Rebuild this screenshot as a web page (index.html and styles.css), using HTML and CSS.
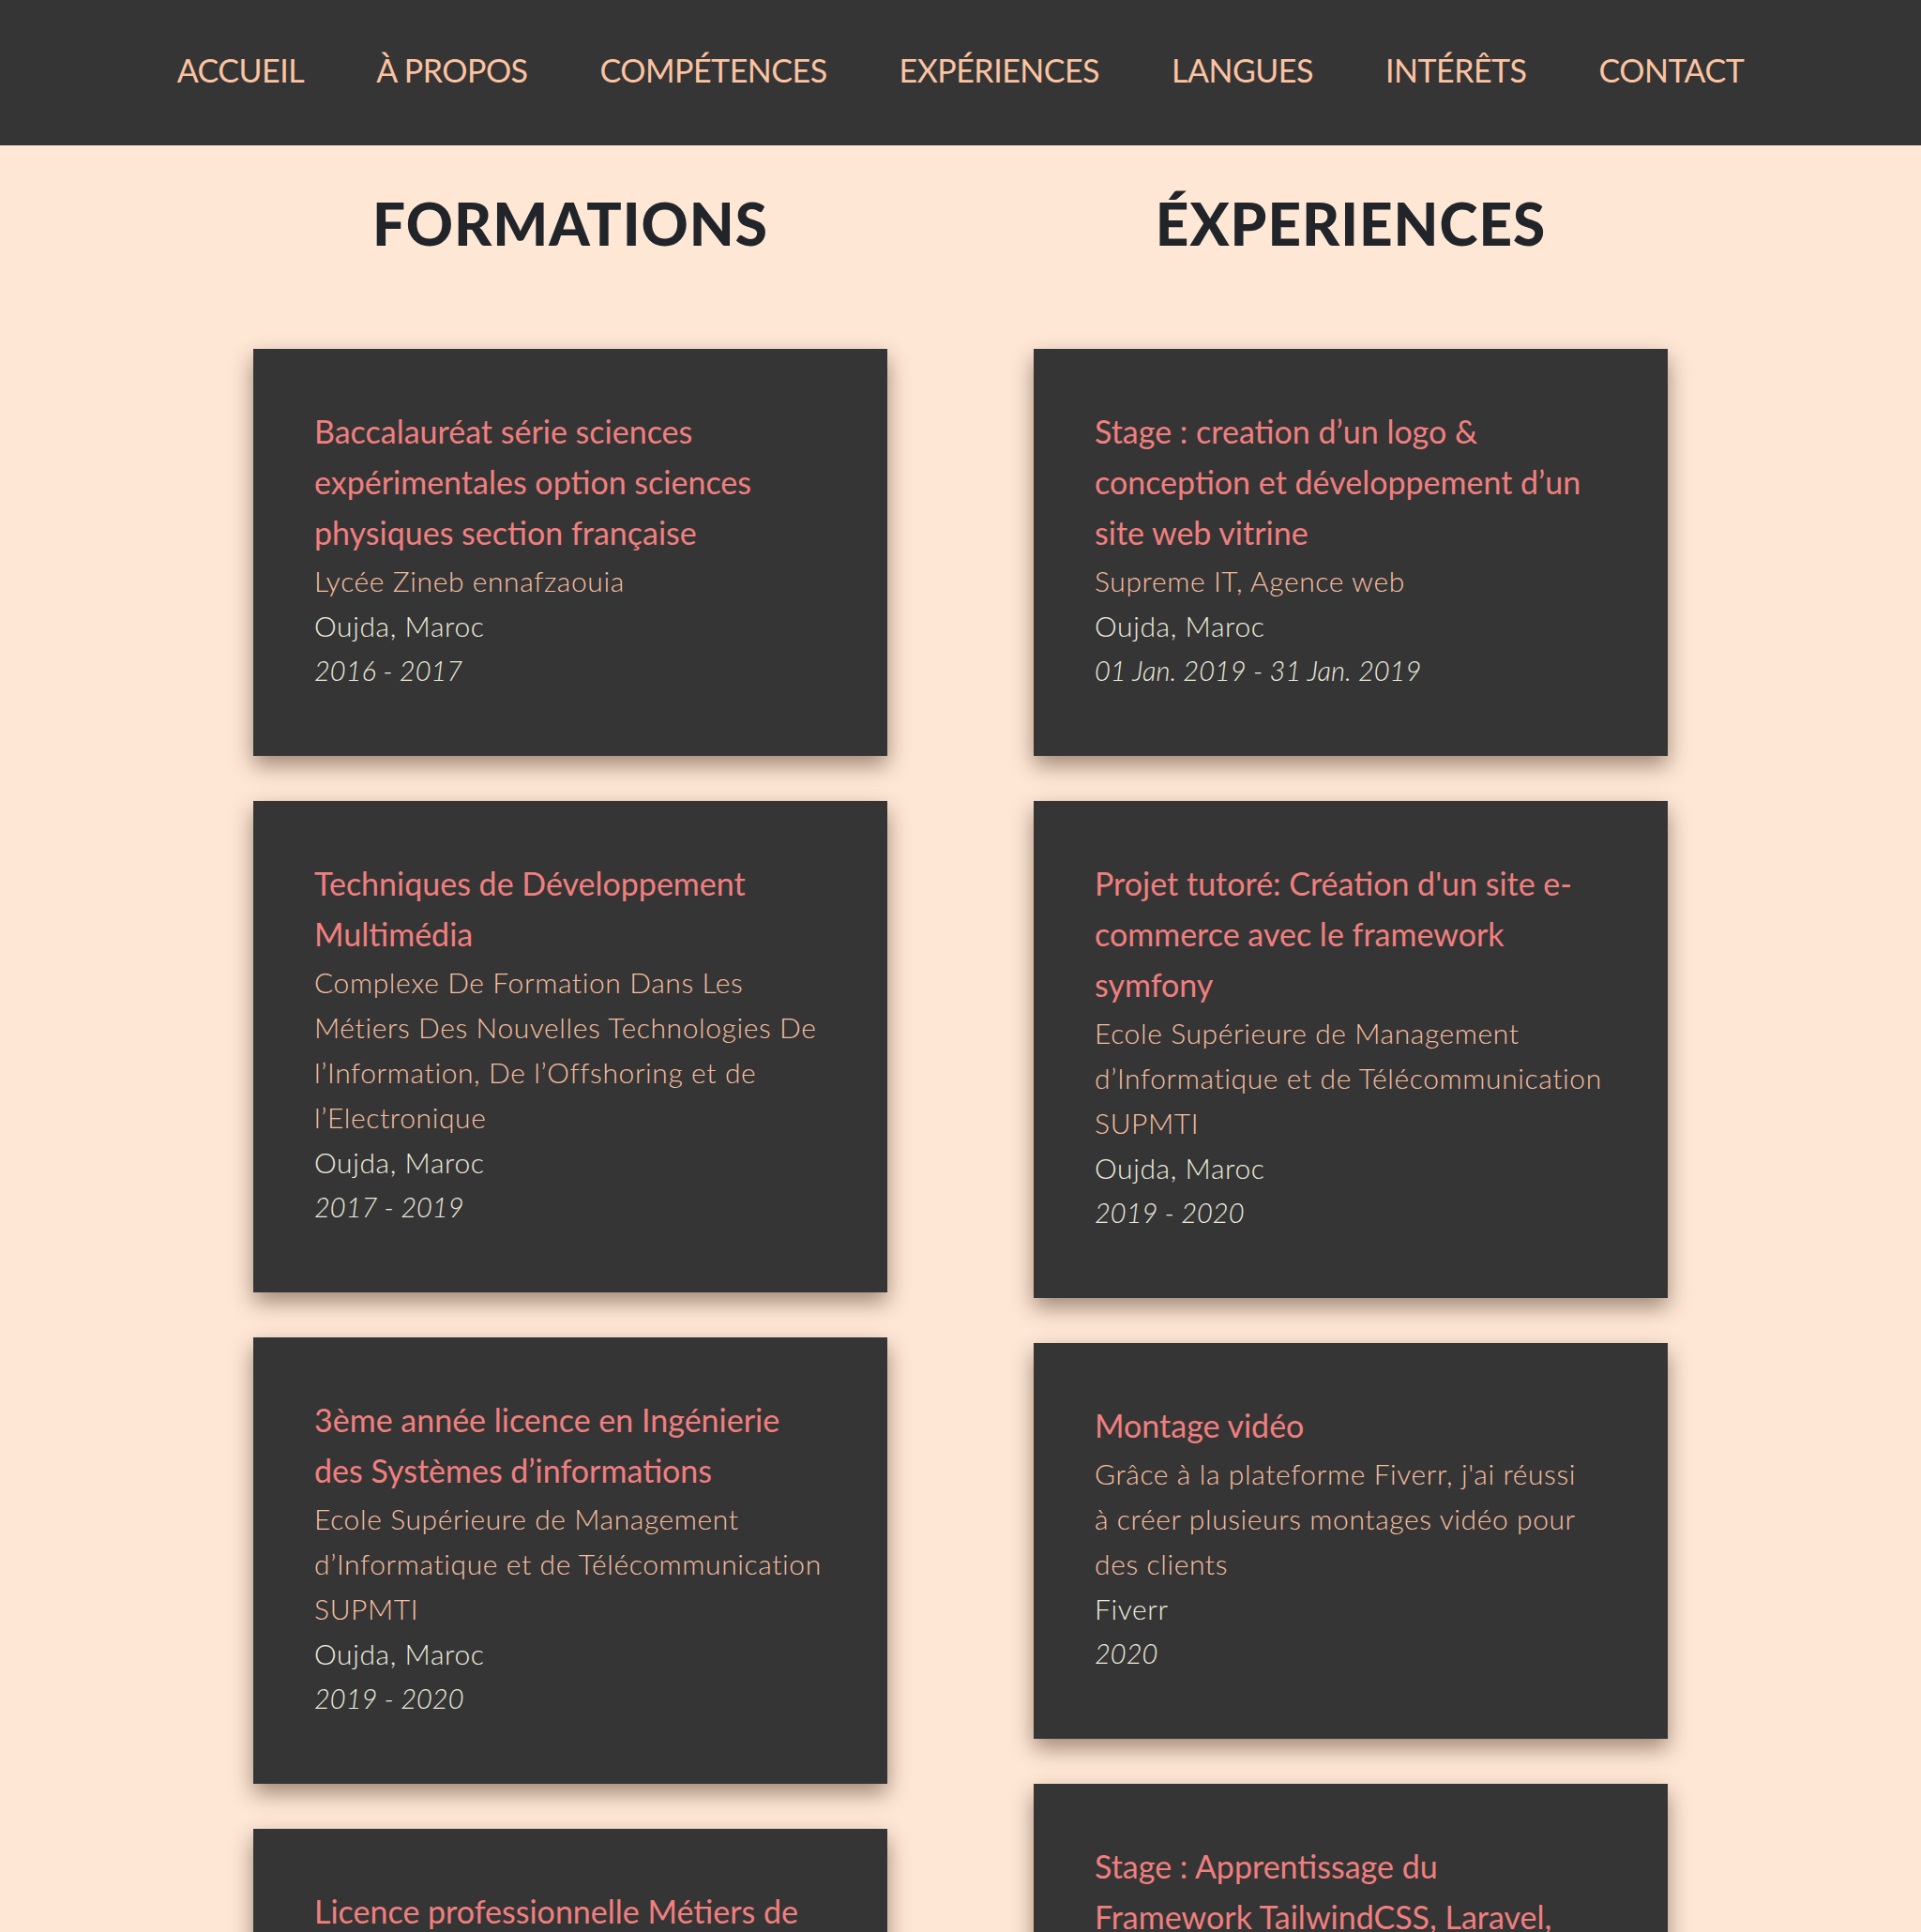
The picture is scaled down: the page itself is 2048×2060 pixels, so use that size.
FILE: index.html
```html
<!DOCTYPE html>
<html lang="fr">
<head>
<meta charset="utf-8">
<title>Parcours</title>
<link rel="stylesheet" href="styles.css">
</head>
<body>
<nav class="topnav">
  <a class="topnav-link" href="#accueil">ACCUEIL</a>
  <a class="topnav-link" href="#apropos">À PROPOS</a>
  <a class="topnav-link" href="#competences">COMPÉTENCES</a>
  <a class="topnav-link" href="#experiences">EXPÉRIENCES</a>
  <a class="topnav-link" href="#langues">LANGUES</a>
  <a class="topnav-link" href="#interets">INTÉRÊTS</a>
  <a class="topnav-link" href="#contact">CONTACT</a>
</nav>

<main class="parcours">
  <section class="column">
    <h2 class="column-title">FORMATIONS</h2>
    <article class="card">
      <h3 class="card-title">Baccalauréat série sciences<br>expérimentales option sciences<br>physiques section française</h3>
      <p class="card-org">Lycée Zineb ennafzaouia</p>
      <p class="card-place">Oujda, Maroc</p>
      <p class="card-date">2016 - 2017</p>
    </article>
    <article class="card">
      <h3 class="card-title">Techniques de Développement<br>Multimédia</h3>
      <p class="card-org">Complexe De Formation Dans Les<br>Métiers Des Nouvelles Technologies De<br>l’Information, De l’Offshoring et de<br>l’Electronique</p>
      <p class="card-place">Oujda, Maroc</p>
      <p class="card-date">2017 - 2019</p>
    </article>
    <article class="card">
      <h3 class="card-title">3ème année licence en Ingénierie<br>des Systèmes d’informations</h3>
      <p class="card-org">Ecole Supérieure de Management<br>d’Informatique et de Télécommunication<br>SUPMTI</p>
      <p class="card-place">Oujda, Maroc</p>
      <p class="card-date">2019 - 2020</p>
    </article>
    <article class="card">
      <h3 class="card-title">Licence professionnelle Métiers de<br>l’Informatique</h3>
      <p class="card-org">Faculté des Sciences</p>
      <p class="card-place">Oujda, Maroc</p>
      <p class="card-date">2020 - 2021</p>
    </article>
  </section>

  <section class="column">
    <h2 class="column-title">ÉXPERIENCES</h2>
    <article class="card">
      <h3 class="card-title">Stage : creation d’un logo &amp;<br>conception et développement d’un<br>site web vitrine</h3>
      <p class="card-org">Supreme IT, Agence web</p>
      <p class="card-place">Oujda, Maroc</p>
      <p class="card-date">01 Jan. 2019 - 31 Jan. 2019</p>
    </article>
    <article class="card">
      <h3 class="card-title">Projet tutoré: Création d'un site e-<br>commerce avec le framework<br>symfony</h3>
      <p class="card-org">Ecole Supérieure de Management<br>d’Informatique et de Télécommunication<br>SUPMTI</p>
      <p class="card-place">Oujda, Maroc</p>
      <p class="card-date">2019 - 2020</p>
    </article>
    <article class="card">
      <h3 class="card-title">Montage vidéo</h3>
      <p class="card-org">Grâce à la plateforme Fiverr, j'ai réussi<br>à créer plusieurs montages vidéo pour<br>des clients</p>
      <p class="card-place">Fiverr</p>
      <p class="card-date">2020</p>
    </article>
    <article class="card">
      <h3 class="card-title">Stage : Apprentissage du<br>Framework TailwindCSS, Laravel,<br>Livewire</h3>
      <p class="card-org">Supreme IT, Agence web</p>
      <p class="card-place">Oujda, Maroc</p>
      <p class="card-date">2021</p>
    </article>
  </section>
</main>
</body>
</html>
```

FILE: styles.css
```css
html, body {
  margin: 0;
  padding: 0;
}

body {
  background: #ffe7d6;
  font-family: "Lato", "Open Sans", sans-serif;
}

.topnav {
  height: 155px;
  background: #353535;
  display: flex;
  justify-content: center;
  align-items: center;
  gap: 77px;
  padding-bottom: 6px;
  box-sizing: border-box;
}

.topnav-link {
  color: #fcc3a2;
  text-decoration: none;
  font-size: 34px;
  font-weight: 400;
  letter-spacing: -0.5px;
}

.parcours {
  width: 1664px;
  margin: 0 auto;
  display: grid;
  grid-template-columns: 1fr 1fr;
}

.column {
  display: flex;
  flex-direction: column;
  align-items: center;
}

.column-title {
  margin: 46px 0 97px;
  font-size: 62px;
  line-height: 1.2;
  font-weight: 900;
  color: #212529;
  letter-spacing: 1px;
}

.card {
  width: 676px;
  box-sizing: border-box;
  padding: 61px 65px 67px;
  margin-bottom: 48px;
  background: #353535;
  box-shadow: 0 10px 22px rgba(40, 20, 0, 0.45);
}

.card-title {
  margin: 0;
  font-size: 34px;
  line-height: 54px;
  font-weight: 400;
  color: #f07f7f;
}

.card-org,
.card-place,
.card-date {
  margin: 0;
  font-size: 30px;
  line-height: 48px;
  font-weight: 300;
  letter-spacing: 0.6px;
}

.card-org {
  color: #f6bfa1;
}

.card-place {
  color: #ecebdd;
}

.card-date {
  color: #ecebdd;
  font-style: italic;
  font-size: 29px;
  letter-spacing: 0;
}
```
